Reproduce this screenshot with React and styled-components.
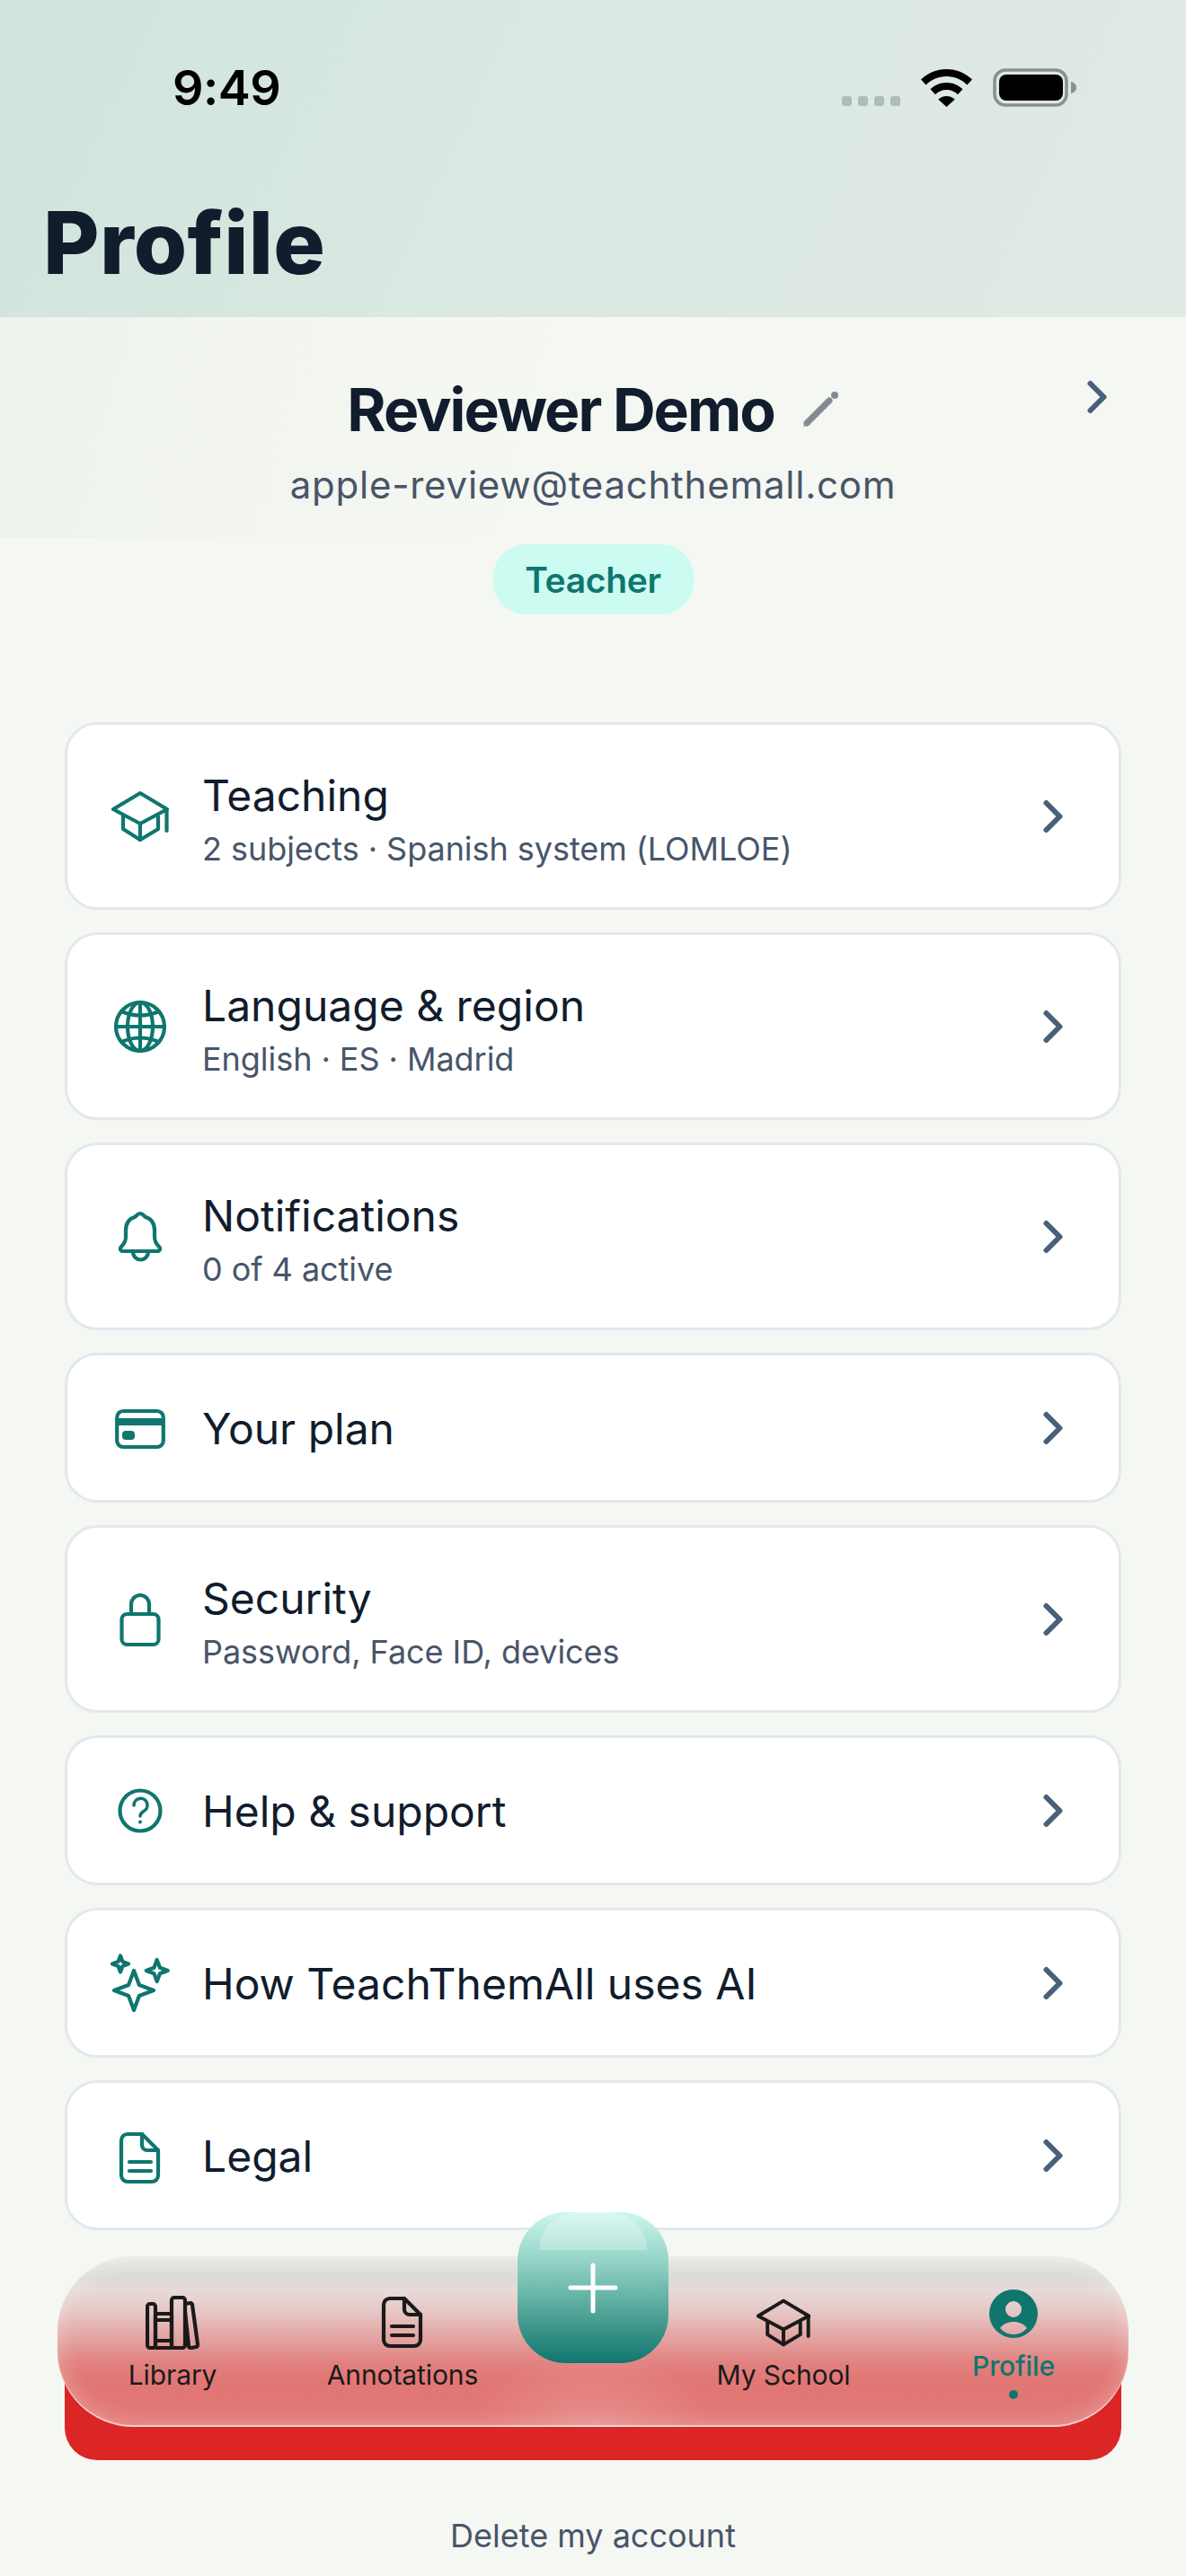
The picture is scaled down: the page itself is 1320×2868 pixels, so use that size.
import React from 'react';
import styled, { createGlobalStyle } from 'styled-components';

const GlobalStyle = createGlobalStyle`
  html, body {
    margin: 0;
    padding: 0;
    background: #f5f7f2;
  }
  * {
    box-sizing: border-box;
  }
`;

const Page = styled.div`
  position: relative;
  width: 1320px;
  height: 2868px;
  overflow: hidden;
  background: #f5f7f2;
  font-family: Inter, 'Noto Sans', sans-serif;
  color: #111827;
`;

const Header = styled.header`
  height: 353px;
  padding-top: 75px;
  background: linear-gradient(115deg, #cfe4dc 0%, #d9e8e1 40%, #e1e9e4 100%);
`;

const StatusBar = styled.div`
  height: 45px;
  padding: 0 122px 0 192px;
  display: flex;
  align-items: center;
  justify-content: space-between;
`;

const Clock = styled.span`
  font-size: 54px;
  font-weight: 600;
  line-height: 45px;
  letter-spacing: -0.5px;
  color: #000;
`;

const StatusIcons = styled.div`
  display: flex;
  align-items: flex-end;
`;

const SignalDots = styled.div`
  display: flex;
  gap: 7px;
  margin: 0 23px 1px 0;
`;

const SignalDot = styled.span`
  width: 11px;
  height: 11px;
  border-radius: 3px;
  background: #b0bdb7;
`;

const Title = styled.h1`
  margin: 102px 0 0;
  padding-left: 48px;
  font-size: 96px;
  line-height: 96px;
  font-weight: 800;
  letter-spacing: 0.3px;
  color: #111c2d;
`;

const ProfileSection = styled.section`
  position: relative;
  padding-top: 64px;
  display: flex;
  flex-direction: column;
  align-items: center;
  background: linear-gradient(105deg, #eef2ed 0%, #f5f7f2 45%) top / 100% 246px no-repeat;
`;

const NameRow = styled.div`
  display: flex;
  align-items: center;
  gap: 30px;
`;

const Name = styled.h2`
  margin: 0;
  font-size: 66px;
  line-height: 78px;
  font-weight: 700;
  letter-spacing: -2px;
  color: #111c2d;
`;

const Email = styled.div`
  margin-top: 18px;
  font-size: 42px;
  line-height: 54px;
  letter-spacing: 0.75px;
  color: #475569;
`;

const RolePill = styled.div`
  margin-top: 39px;
  width: 223px;
  height: 78px;
  border-radius: 36px;
  display: flex;
  align-items: center;
  justify-content: center;
  background: #ccfbf1;
  color: #0f766e;
  font-size: 39px;
  font-weight: 600;
  letter-spacing: -0.3px;
`;

const ProfileChevron = styled.div`
  position: absolute;
  top: 59px;
  right: 69px;
  line-height: 0;
`;

const MenuList = styled.div`
  margin: 120px 72px 0;
  display: flex;
  flex-direction: column;
  gap: 25px;
`;

const MenuCard = styled.div`
  height: ${p => (p.$tall ? 209 : 167)}px;
  padding: 0 43px 0 45px;
  display: flex;
  align-items: center;
  background: #fff;
  border: 3px solid #e2e8f0;
  border-radius: 36px;
`;

const MenuIcon = styled.svg`
  flex: none;
  width: 72px;
  height: 72px;
  fill: none;
  stroke: #0f766e;
  stroke-width: 4.2;
  stroke-linecap: round;
  stroke-linejoin: round;
`;

const MenuText = styled.div`
  flex: 1;
  margin-left: 33px;
  padding-top: ${p => (p.$tall ? 7 : 2)}px;
`;

const MenuTitle = styled.div`
  font-size: 48px;
  line-height: 60px;
  color: #111c2d;
`;

const MenuSub = styled.div`
  margin-top: 5px;
  font-size: 36px;
  line-height: 48px;
  letter-spacing: -0.05px;
  color: #475569;
`;

const Chevron = styled.svg`
  flex: none;
  width: 60px;
  height: 60px;
  fill: none;
  stroke: #4a607a;
  stroke-width: 2.4;
  stroke-linecap: round;
  stroke-linejoin: round;
`;

const SignOutButton = styled.div`
  margin: 89px 72px 0;
  height: 167px;
  background: #dc2626;
  border-radius: 36px;
`;

const DeleteLink = styled.div`
  margin-top: 62px;
  text-align: center;
  font-size: 36px;
  line-height: 44px;
  color: #475569;
`;

const TabBar = styled.nav`
  position: absolute;
  left: 64px;
  right: 64px;
  top: 2512px;
  height: 190px;
  padding-top: 44px;
  display: flex;
  border-radius: 84px;
  background:
    radial-gradient(ellipse 130px 90px at 50% 100%, rgba(255, 255, 255, 0.16), rgba(255, 255, 255, 0)),
    linear-gradient(180deg, #e9eae7 0%, #dedddA 9%, #dcdbd7 14%, #e7dad8 20%, #e6c6c4 33%, #e39f9d 50%, #e18280 62%, #e17775 72%, #e27876 100%);
  box-shadow: inset 0 -2px 0 rgba(255, 255, 255, 0.6), inset 0 0 26px rgba(255, 255, 255, 0.32);
`;

const Tab = styled.div`
  width: 256px;
  margin-top: ${p => (p.$active ? -10 : 0)}px;
  display: flex;
  flex-direction: column;
  align-items: center;
  color: ${p => (p.$active ? '#0f766e' : '#1a1a1a')};
`;

const TabSpacer = styled.div`
  width: 168px;
`;

const TabIcon = styled.svg`
  width: 60px;
  height: 60px;
  fill: none;
  stroke: currentColor;
  stroke-width: 4.2;
  stroke-linecap: round;
  stroke-linejoin: round;
`;

const TabLabel = styled.span`
  margin-top: 10px;
  font-size: 30px;
  line-height: 36px;
  letter-spacing: -0.1px;
  font-weight: ${p => (p.$active ? 500 : 400)};
`;

const ActiveDot = styled.span`
  margin-top: 9px;
  width: 10px;
  height: 10px;
  border-radius: 50%;
  background: #0f766e;
`;

const AddButton = styled.button`
  position: absolute;
  left: 512px;
  top: -49px;
  width: 168px;
  height: 168px;
  padding: 0;
  border: 0;
  border-radius: 54px;
  display: flex;
  align-items: center;
  justify-content: center;
  background: linear-gradient(180deg, #ccf7ec 0%, #8fd0c3 35%, #4a9f93 70%, #0f766e 100%);
`;

const AddShine = styled.span`
  position: absolute;
  left: 24px;
  right: 24px;
  top: 0;
  height: 42px;
  border-radius: 42px 42px 0 0;
  background: rgba(255, 255, 255, 0.25);
`;

const AddIcon = styled.svg`
  width: 60px;
  height: 60px;
  fill: none;
  stroke: #fff;
  stroke-width: 5;
  stroke-linecap: round;
`;

const capShape = (
  <>
    <path d="M36 10 66 28 36 44 6 28Z" />
    <path d="M17 36V50L36 62 56 50V36" />
    <path d="M36 44V62" />
    <path d="M65.5 28V52" />
  </>
);

const fileShape = (
  <>
    <path d="M38 12H22a7 7 0 0 0-7 7V58a7 7 0 0 0 7 7H49a7 7 0 0 0 7-7V30Z" />
    <path d="M38 12V24a6 6 0 0 0 6 6H56" />
    <path d="M24 43H48M24 53H48" />
  </>
);

const star = (x, y, r) => {
  const k = r * 0.27;
  return `M${x} ${y - r}L${x + k} ${y - k}L${x + r} ${y}L${x + k} ${y + k}L${x} ${y + r}L${x - k} ${y + k}L${x - r} ${y}L${x - k} ${y - k}Z`;
};

const menuItems = [
  { title: 'Teaching', sub: '2 subjects · Spanish system (LOMLOE)', icon: capShape },
  {
    title: 'Language & region',
    sub: 'English · ES · Madrid',
    icon: (
      <>
        <circle cx="36" cy="36" r="27" />
        <ellipse cx="36" cy="36" rx="14" ry="27" />
        <path d="M36 9V63M9 36H63" />
        <path d="M15 19Q36 28 57 19M15 53Q36 44 57 53" />
      </>
    )
  },
  {
    title: 'Notifications',
    sub: '0 of 4 active',
    icon: (
      <>
        <path d="M36 10c3 0 4 3 6 4 7 2 10 8 10 15v7c0 5 2 8 5 11 2 2 1 5-2 5H17c-3 0-4-3-2-5 3-3 5-6 5-11v-7c0-7 3-13 10-15 2-1 3-4 6-4Z" />
        <path d="M28 53a8.5 8.5 0 0 0 17 0" />
      </>
    )
  },
  {
    title: 'Your plan',
    icon: (
      <>
        <rect x="10.2" y="17" width="51.6" height="40" rx="7" />
        <rect x="10" y="25" width="52" height="8" fill="#0f766e" stroke="none" />
        <rect x="16" y="39" width="14" height="10" rx="4" fill="#0f766e" stroke="none" />
      </>
    )
  },
  {
    title: 'Security',
    sub: 'Password, Face ID, devices',
    icon: (
      <>
        <rect x="15.5" y="30" width="41" height="34" rx="6" />
        <path d="M26 30V19a10 10 0 0 1 20 0V30" />
      </>
    )
  },
  {
    title: 'Help & support',
    icon: (
      <>
        <circle cx="36" cy="36" r="22.5" />
        <path d="M29 30a7.5 7.5 0 1 1 11 6.5c-2.500 1.500-4 3-4 5.500" strokeWidth="3.6" />
        <circle cx="36" cy="48.6" r="2" fill="#0f766e" stroke="none" />
      </>
    )
  },
  {
    title: 'How TeachThemAll uses AI',
    icon: (
      <>
        <path d={star(29, 44, 22)} />
        <path d={star(14, 14.5, 9)} />
        <path d={star(54.7, 22, 12)} />
      </>
    )
  },
  { title: 'Legal', icon: fileShape }
];

function RightChevron() {
  return (
    <Chevron viewBox="0 0 24 24">
      <path d="M9 6l6 6-6 6" />
    </Chevron>
  );
}

function MenuRow({ item }) {
  const tall = Boolean(item.sub);
  return (
    <MenuCard $tall={tall}>
      <MenuIcon viewBox="0 0 72 72">{item.icon}</MenuIcon>
      <MenuText $tall={tall}>
        <MenuTitle>{item.title}</MenuTitle>
        {item.sub && <MenuSub>{item.sub}</MenuSub>}
      </MenuText>
      <RightChevron />
    </MenuCard>
  );
}

export default function App() {
  return (
    <Page>
      <GlobalStyle />
      <Header>
        <StatusBar>
          <Clock>9:49</Clock>
          <StatusIcons>
            <SignalDots>
              <SignalDot />
              <SignalDot />
              <SignalDot />
              <SignalDot />
            </SignalDots>
            <svg width="57" height="42" viewBox="0 0 57 42">
              <path d="M28.5 0C17.5 0 7.6 4.3 0 11.5l5.5 6C11.5 11.6 19.6 8 28.5 8s17 3.6 23 9.5l5.5-6C49.4 4.3 39.5 0 28.5 0Z" fill="#000" />
              <path d="M28.5 15c-7 0-13.3 2.8-18 7.3l5.5 6c3.2-3.2 7.6-5.2 12.5-5.2s9.3 2 12.5 5.2l5.5-6c-4.7-4.500-11-7.3-18-7.3Z" fill="#000" />
              <path d="M28.5 30c-3.6 0-6.8 1.4-9.2 3.7L28.5 42l9.2-8.3c-2.4-2.3-5.6-3.7-9.2-3.7Z" fill="#000" />
            </svg>
            <svg width="93" height="43" viewBox="0 0 93 43" style={{ marginLeft: 23 }}>
              <rect x="2" y="2" width="80" height="39" rx="12" fill="none" stroke="#8a918d" strokeWidth="3.5" />
              <rect x="7" y="7" width="71" height="29" rx="8" fill="#000" />
              <path d="M87 15c3 .5 6 3 6 6.500s-3 6-6 6.500Z" fill="#8a918d" />
            </svg>
          </StatusIcons>
        </StatusBar>
        <Title>Profile</Title>
      </Header>

      <ProfileSection>
        <NameRow>
          <Name>Reviewer Demo</Name>
          <svg width="42" height="42" viewBox="0 0 42 42">
            <path d="M6 36 31 11" stroke="#858b93" strokeWidth="7" strokeLinecap="round" />
            <path d="M2 40l2-6 4 4Z" fill="#858b93" />
            <circle cx="37" cy="5" r="4" fill="#858b93" />
          </svg>
        </NameRow>
        <Email>apple-review@teachthemall.com</Email>
        <RolePill>Teacher</RolePill>
        <ProfileChevron>
          <RightChevron />
        </ProfileChevron>
      </ProfileSection>

      <MenuList>
        {menuItems.map(item => (
          <MenuRow key={item.title} item={item} />
        ))}
      </MenuList>

      <SignOutButton />
      <DeleteLink>Delete my account</DeleteLink>

      <TabBar>
        <Tab>
          <TabIcon viewBox="0 0 60 60">
            <rect x="2" y="9" width="9" height="49" rx="3" />
            <rect x="11" y="20" width="18" height="38" rx="2" />
            <path d="M11 27H29M11 50H29" />
            <rect x="29" y="2" width="15" height="56" rx="3" />
            <path d="M44 9 50 8c1 0 2 1 2 2l6 44c0 2-1 3-2 3l-5 1c-2 0-3-1-3-2L44 18" />
          </TabIcon>
          <TabLabel>Library</TabLabel>
        </Tab>
        <Tab>
          <TabIcon viewBox="6 9 60 60">{fileShape}</TabIcon>
          <TabLabel>Annotations</TabLabel>
        </Tab>
        <TabSpacer />
        <Tab>
          <TabIcon viewBox="4 4 64 64">{capShape}</TabIcon>
          <TabLabel>My School</TabLabel>
        </Tab>
        <Tab $active>
          <TabIcon viewBox="0 0 60 60">
            <path
              fill="#0f766e"
              stroke="none"
              fillRule="evenodd"
              d="M30 3a27 27 0 1 1 0 54 27 27 0 0 1 0-54ZM30 16a9 9 0 1 0 0 18 9 9 0 0 0 0-18ZM15 46c4 4.500 9 7 15 7s11-2.500 15-7c-4-5-9-7-15-7s-11 2-15 7Z"
            />
          </TabIcon>
          <TabLabel $active>Profile</TabLabel>
          <ActiveDot />
        </Tab>
        <AddButton aria-label="Add">
          <AddShine />
          <AddIcon viewBox="0 0 60 60">
            <path d="M30 5V56M5 30H55" />
          </AddIcon>
        </AddButton>
      </TabBar>
    </Page>
  );
}
